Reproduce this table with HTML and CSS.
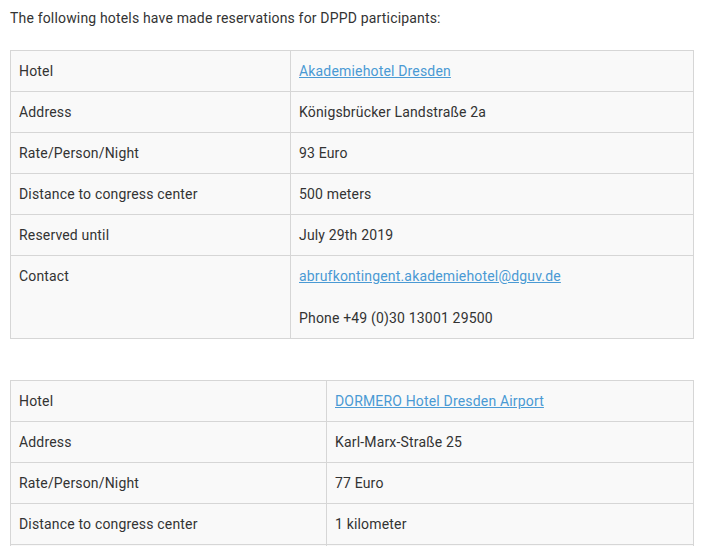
FILE: index.html
```
<!DOCTYPE html>
<html>
<head>
<meta charset="utf-8">
<link rel="stylesheet" href="styles.css">
</head>
<body>
<div class="content">
  <p class="intro">The following hotels have made reservations for DPPD participants:</p>
  <table class="hotel hotel-a">
    <tr><td class="label">Hotel</td><td><a href="#">Akademiehotel Dresden</a></td></tr>
    <tr><td class="label">Address</td><td>Königsbrücker Landstraße 2a</td></tr>
    <tr><td class="label">Rate/Person/Night</td><td>93 Euro</td></tr>
    <tr><td class="label">Distance to congress center</td><td>500 meters</td></tr>
    <tr><td class="label">Reserved until</td><td>July 29th 2019</td></tr>
    <tr><td class="label">Contact</td><td><p class="line gap"><a href="#">abrufkontingent.akademiehotel@dguv.de</a></p><p class="line">Phone +49 (0)30 13001 29500</p></td></tr>
  </table>
  <table class="hotel hotel-b">
    <tr><td class="label">Hotel</td><td><a href="#">DORMERO Hotel Dresden Airport</a></td></tr>
    <tr><td class="label">Address</td><td>Karl-Marx-Straße 25</td></tr>
    <tr><td class="label">Rate/Person/Night</td><td>77 Euro</td></tr>
    <tr><td class="label">Distance to congress center</td><td>1 kilometer</td></tr>
    <tr><td class="label">Reserved until</td><td>July 29th 2019</td></tr>
  </table>
</div>
</body>
</html>
```
FILE: styles.css
```
html, body { margin: 0; padding: 0; background: #fff; }
body {
  font-family: Roboto, "Liberation Sans", Arial, sans-serif;
  font-size: 14px;
  letter-spacing: 0.17px;
  color: #333;
  line-height: 20px;
}
.content { padding: 8px 10px; width: 684px; }
.intro { margin: 0 0 22px; }
.hotel {
  border-collapse: collapse;
  width: 684px;
  background: #f9f9f9;
  margin-bottom: 41px;
  table-layout: fixed;
}
.hotel td {
  border: 1px solid #d6d6d6;
  padding: 10px 8px;
  vertical-align: top;
  text-align: left;
}
.hotel-a td.label { width: 263px; }
.hotel-b td.label { width: 299px; }
a { color: #4a9ad4; text-decoration: underline; }
.line { margin: 0; }
.line.gap { margin-bottom: 22px; }
```
